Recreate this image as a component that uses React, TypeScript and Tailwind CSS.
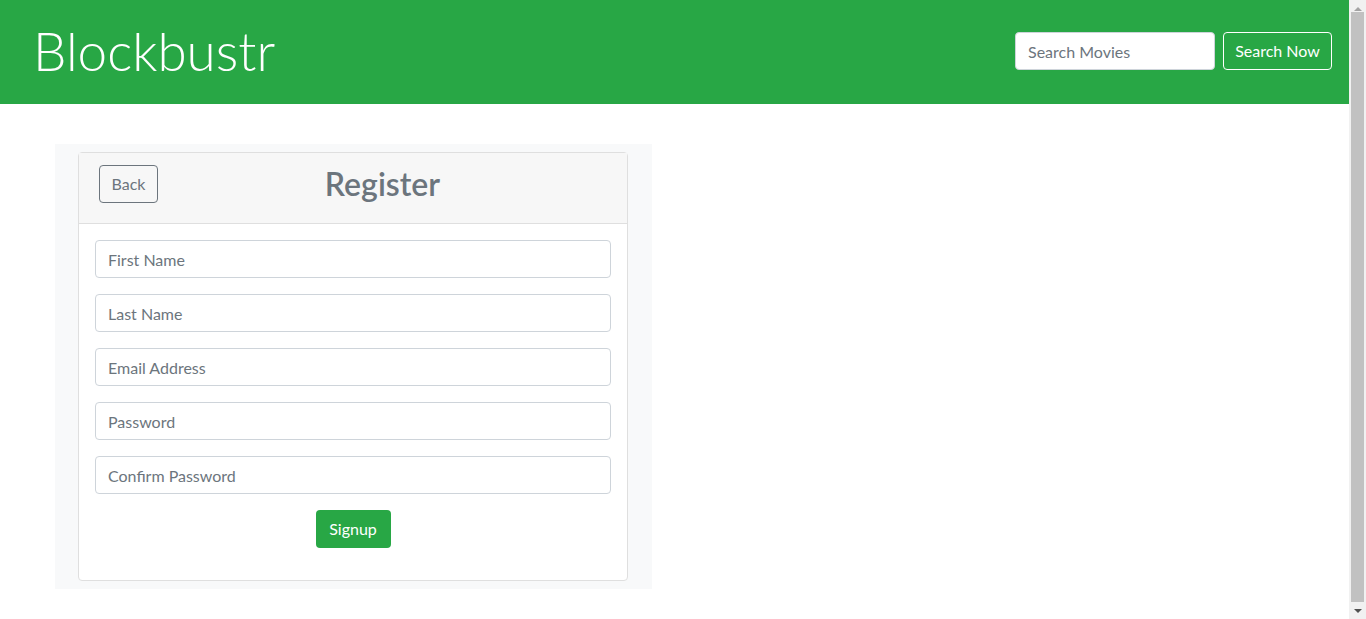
const fields = ["First Name", "Last Name", "Email Address", "Password", "Confirm Password"];

function Scrollbar() {
    // fake classic scrollbar, the page in the shot is a hair taller than the window
    return (
        <div className="w-[17px] h-full bg-[#f1f1f1] flex flex-col items-center">
            <div className="h-[17px] flex items-center justify-center">
                <div className="w-0 h-0 border-l-[4px] border-r-[4px] border-b-[4px] border-l-transparent border-r-transparent border-b-[#a3a3a3]" />
            </div>
            <div className="flex-1 w-[13px] bg-[#c1c1c1] my-[-5px] mb-0" />
            <div className="h-[17px] flex items-center justify-center">
                <div className="w-0 h-0 border-l-[4px] border-r-[4px] border-t-[4px] border-l-transparent border-r-transparent border-t-[#505050]" />
            </div>
        </div>
    );
}

export default function App() {
    return (
        <div className="h-[619px] overflow-hidden flex bg-white font-['Lato','Noto_Sans',sans-serif] text-[#212529]">
            <div className="flex-1">
                <nav className="h-[104px] bg-[#28a745] flex items-center justify-between pl-[33px] pr-[17px]">
                    <h1 className="text-[53px] font-light text-white leading-none -mt-[3px]">Blockbustr</h1>
                    <form className="flex items-center gap-2 -mt-[2px]" onSubmit={(e) => e.preventDefault()}>
                        <input
                            type="text"
                            placeholder="Search Movies"
                            className="w-[200px] h-[38px] rounded border border-[#ced4da] bg-white px-3 text-base text-[#495057] placeholder:text-[#6c757d] outline-none"
                        />
                        <button className="h-[38px] w-[109px] rounded border border-white text-white text-base">Search Now</button>
                    </form>
                </nav>
                <div className="ml-[55px] mt-10 w-[597px] bg-[#f8f9fa] pl-[23px] pr-[24px] pt-2 pb-[8px]">
                    <div className="rounded border border-[#dfdfdf] bg-white">
                        <div className="flex items-start bg-[#f7f7f7] border-b border-[#dfdfdf] px-5 pt-3 pb-3">
                            <button className="h-[38px] w-[59px] rounded border border-[#6c757d] text-[#6c757d] text-base">Back</button>
                            <h2 className="flex-1 text-center text-[32px] font-semibold text-[#6c757d] leading-[38px] mb-2">Register</h2>
                        </div>
                        <form className="p-4 flex flex-col" onSubmit={(e) => e.preventDefault()}>
                            {fields.map((f) => (
                                <input
                                    key={f}
                                    type={f.includes("Password") ? "password" : "text"}
                                    placeholder={f}
                                    className="mb-4 h-[38px] w-full rounded border border-[#ced4da] bg-white px-3 text-base text-[#495057] placeholder:text-[#6c757d] outline-none"
                                />
                            ))}
                            <div className="flex justify-center mb-4">
                                <button className="h-[38px] w-[75px] rounded bg-[#28a745] text-white text-base">Signup</button>
                            </div>
                        </form>
                    </div>
                </div>
            </div>
            <Scrollbar />
        </div>
    );
}
